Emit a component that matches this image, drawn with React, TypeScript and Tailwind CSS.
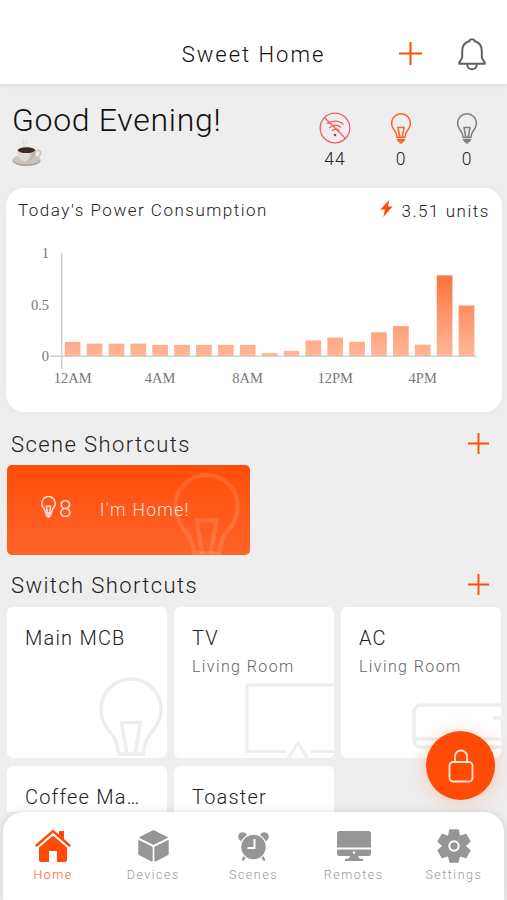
import type { ReactNode } from "react";
import clsx from "clsx";

const usage = [
  0.136, 0.12, 0.12, 0.12, 0.108, 0.108, 0.108, 0.108, 0.108, 0.028, 0.05,
  0.15, 0.178, 0.138, 0.23, 0.29, 0.11, 0.783, 0.49,
];

const hours = [
  { label: "12AM", slot: 0 },
  { label: "4AM", slot: 4 },
  { label: "8AM", slot: 8 },
  { label: "12PM", slot: 12 },
  { label: "4PM", slot: 16 },
];

const Plus = ({ className }: { className?: string }) => (
  <svg viewBox="0 0 22 22" className={className} stroke="#fb4f0a" strokeWidth="2">
    <path d="M11 0v22M0 11h22" />
  </svg>
);

const Bell = () => (
  <svg
    viewBox="0 0 28 33"
    className="h-[33px] w-7"
    fill="none"
    stroke="#606060"
    strokeWidth="2"
    strokeLinecap="round"
    strokeLinejoin="round"
  >
    <path d="M11.200 3.200C12 .5 16 .5 16.800 3.200C21.500 4.500 23.800 8.500 23.800 13V19C23.800 22 26.800 22.500 26.800 25.800H1.200C1.200 22.500 4.200 22 4.200 19V13C4.200 8.500 6.500 4.500 11.200 3.200Z" />
    <path d="M9.200 26.500C9.500 32.800 18.500 32.800 18.800 26.500" />
  </svg>
);

type BulbProps = { className?: string; stroke: string; width: number };

const Bulb = ({ className, stroke, width }: BulbProps) => (
  <svg
    viewBox="0 0 64 98"
    className={className}
    fill="none"
    stroke={stroke}
    strokeWidth={width}
  >
    <path d="M19.500 77C19 62 12 57 7.500 50C4 44.500 2 38.500 2 32a30 30 0 0 1 60 0C62 38.500 60 44.500 56.500 50C52 57 45 62 44.500 77Z" />
    <path d="M28 77L22.500 45.500H41.500L36 77" />
    <path d="M18.500 84.500h27M22 89.500h20M27 94.500h10" />
  </svg>
);

const NoWifi = () => (
  <svg viewBox="0 0 32 32" className="size-8" fill="none" stroke="#f25f5f" strokeWidth="1.3">
    <circle cx="16" cy="16" r="14.800" />
    <path d="M5.500 5.500L26.500 26.500" />
    <path d="M7.500 11C10 12 11 9.800 14 9.300C18 8.700 22 10 24.500 12.500M10 15.500C12.500 16 13 13.300 16 13.200C18.500 13.200 20.500 14.200 22 15.500M12.500 18.500C14.500 18.500 15 16.800 17 17C18.500 17 19.500 18 20.500 19" />
    <circle cx="16" cy="23" r="1.300" fill="#a3401f" stroke="none" />
  </svg>
);

const Coffee = () => (
  <svg viewBox="0 0 30 28" className="-mt-px h-7 w-[30px]">
    <ellipse cx="14.500" cy="21.500" rx="14" ry="5.500" fill="#aaa59c" />
    <ellipse cx="14.500" cy="20.500" rx="13.500" ry="4.800" fill="#c9c4bb" />
    <path d="M23.500 12C31 9 30 19 22 18.500" fill="none" stroke="#c9c5be" strokeWidth="1.700" />
    <path d="M5 11C5 18 9 22.500 14.500 22.500S24 18 24 11Z" fill="#dedad3" />
    <path d="M19 14C18.500 18 17 21 14.500 22.500C20 22 24 18 24 12Z" fill="#bbb6ae" />
    <ellipse cx="14.500" cy="11" rx="9.700" ry="3.400" fill="#e5e0d9" />
    <ellipse cx="14.500" cy="11.200" rx="8.800" ry="2.900" fill="#3a2b25" />
    <path d="M12 7C14 5 9 4 12 1M15 5C16 4 13 3 14 2" fill="none" stroke="#d4d4d4" strokeWidth="1" />
  </svg>
);

const PowerChart = () => (
  <svg viewBox="0 0 496 166" className="h-[166px] w-full">
    <defs>
      <linearGradient id="bar" gradientUnits="userSpaceOnUse" x1="0" y1="22" x2="0" y2="125">
        <stop offset="0" stopColor="#fe6023" />
        <stop offset="1" stopColor="#ffb799" />
      </linearGradient>
    </defs>
    <path d="M55.750 22V138M44 125.250H471" stroke="#d2d2d2" strokeWidth="1.500" />
    {usage.map((value, i) => (
      <rect
        key={i}
        x={58.8 + i * 21.88}
        y={125 - value * 103}
        width="15.700"
        height={value * 103}
        fill="url(#bar)"
      />
    ))}
    <g fontSize="14.500" fill="#777" className="font-['Liberation_Serif',serif]">
      <text x="43" y="26.500" textAnchor="end">1</text>
      <text x="43" y="78.500" textAnchor="end">0.5</text>
      <text x="43" y="130" textAnchor="end">0</text>
      {hours.map((hour) => (
        <text key={hour.label} x={66.6 + hour.slot * 21.88} y="151.500" textAnchor="middle">
          {hour.label}
        </text>
      ))}
    </g>
  </svg>
);

const Television = () => (
  <svg viewBox="0 0 90 78" className="h-[78px] w-[90px]" fill="none" stroke="#eee" strokeWidth="3">
    <path d="M90 5H3V71.500H42M67 71.500H90M43.500 80L54 63L64.500 80" />
  </svg>
);

const AirConditioner = () => (
  <svg viewBox="0 0 90 58" className="h-[58px] w-[90px]" fill="none" stroke="#eee" strokeWidth="3.500">
    <path d="M90 4H10Q2 4 2 12V38Q2 46 10 46H90M3 38H90M81 17H90" />
  </svg>
);

type SectionTitleProps = { children: ReactNode };

const SectionTitle = ({ children }: SectionTitleProps) => (
  <div className="flex items-center justify-between pl-[11px] pr-[18px]">
    <h2 className="pt-px text-[22px] leading-7 font-light tracking-[1.4px] text-[#222]">{children}</h2>
    <Plus className="-mt-0.5 size-[21px]" />
  </div>
);

type SwitchCardProps = { name: string; room?: string; icon?: ReactNode };

const SwitchCard = ({ name, room, icon }: SwitchCardProps) => (
  <div className="relative h-[151px] overflow-hidden rounded-md bg-white pt-[19px] pl-[18px]">
    <h3 className="text-[20px] leading-6 font-light tracking-[1.2px] text-[#222]">{name}</h3>
    {room && (
      <p className="mt-[7px] text-[16px] leading-5 font-light tracking-[1.4px] text-[#666]">{room}</p>
    )}
    {icon}
  </div>
);

const HomeIcon = () => (
  <svg viewBox="0 0 36 34" className="h-[34px] w-9" fill="currentColor">
    <path d="M4 18.500L18 6.500L32 18.500V31Q32 33 30 33H22V22H14V33H6Q4 33 4 31Z" />
    <path d="M1.500 17L18 2.500L34.500 17" fill="none" stroke="#fff" strokeWidth="5" />
    <path d="M24 2H29V11L24 6.500Z" />
    <path d="M1.500 16.500L18 2L34.500 16.500" fill="none" stroke="currentColor" strokeWidth="2.400" strokeLinecap="round" />
  </svg>
);

const CubeIcon = () => (
  <svg viewBox="0 0 32 34" className="h-[34px] w-8" fill="currentColor" stroke="currentColor" strokeLinejoin="round">
    <path d="M16.500 1.500L30.500 8.500L16.500 15.500L2.500 8.500Z" />
    <path d="M1.800 11.500L15.100 18V32.300L1.800 25.500Z" />
    <path d="M31.200 11.500L17.900 18V32.300L31.200 25.500Z" />
  </svg>
);

const AlarmIcon = () => (
  <svg viewBox="0 0 32 32" className="h-8 w-8" fill="currentColor">
    <path d="M9 25L6 29.500M24 25L27 29.500" stroke="currentColor" strokeWidth="2.400" strokeLinecap="round" />
    <circle cx="5.700" cy="6.700" r="4.500" />
    <circle cx="27.300" cy="6.700" r="4.500" />
    <circle cx="16.500" cy="17" r="12.800" stroke="#fff" strokeWidth="1.200" />
    <path d="M17.500 9V18H10.500" fill="none" stroke="#fff" strokeWidth="2" />
  </svg>
);

const MonitorIcon = () => (
  <svg viewBox="0 0 36 32" className="h-8 w-9" fill="currentColor">
    <path d="M3.500 1H32.500Q35 1 35 3.500V17.500H1V3.500Q1 1 3.500 1Z" />
    <path d="M1 19.500H35V23.500Q35 26 32.500 26H22Q22 29 27 29V31H9V29Q14 29 14 26H3.500Q1 26 1 23.500Z" />
    <circle cx="18" cy="22.500" r="1.200" fill="#fff" />
  </svg>
);

const GearIcon = () => (
  <svg viewBox="0 0 34 34" className="size-[34px]" fill="currentColor">
    <circle cx="17" cy="17" r="12" />
    <g stroke="currentColor" strokeWidth="1.500" strokeLinejoin="round">
      <path d="M13 1H21L22.500 8H11.500Z" />
      <path d="M13 1H21L22.500 8H11.500Z" transform="rotate(60 17 17)" />
      <path d="M13 1H21L22.500 8H11.500Z" transform="rotate(120 17 17)" />
      <path d="M13 1H21L22.500 8H11.500Z" transform="rotate(180 17 17)" />
      <path d="M13 1H21L22.500 8H11.500Z" transform="rotate(240 17 17)" />
      <path d="M13 1H21L22.500 8H11.500Z" transform="rotate(300 17 17)" />
    </g>
    <circle cx="17" cy="17" r="4.700" fill="none" stroke="#fff" strokeWidth="2" />
  </svg>
);

const tabs = [
  { label: "Home", icon: <HomeIcon />, active: true },
  { label: "Devices", icon: <CubeIcon />, active: false },
  { label: "Scenes", icon: <AlarmIcon />, active: false },
  { label: "Remotes", icon: <MonitorIcon />, active: false },
  { label: "Settings", icon: <GearIcon />, active: false },
];

const stats = [
  { icon: <NoWifi />, count: 44 },
  { icon: <Bulb className="h-[31px] w-5" stroke="#f9682b" width={5} />, count: 0 },
  { icon: <Bulb className="h-[31px] w-5" stroke="#808080" width={5} />, count: 0 },
];

const App = () => {
  return (
    <div className="relative flex h-[900px] w-[507px] flex-col overflow-hidden bg-[#eee] font-[Roboto,sans-serif]">
      <header className="z-10 grid h-[84px] shrink-0 grid-cols-[1fr_auto_1fr] items-center bg-white pt-6 shadow-[0_1px_5px_rgba(0,0,0,0.1)]">
        <h1 className="col-start-2 pt-0.5 text-[22px] leading-7 font-[350] tracking-[2px] text-[#111]">
          Sweet Home
        </h1>
        <div className="flex items-center justify-end gap-9 pr-[21px]">
          <Plus className="-mt-0.5 size-[23px]" />
          <Bell />
        </div>
      </header>

      <main className="h-[728px] shrink-0 overflow-hidden">
        <section className="flex h-[104px] justify-between pl-3 pr-[7px]">
          <div className="pt-4">
            <h2 className="text-[32px] leading-10 font-light tracking-[0.7px] text-[#111]">
              Good Evening!
            </h2>
            <Coffee />
          </div>
          <div className="grid grid-cols-3 pt-7">
            {stats.map((stat, i) => (
              <div key={i} className="flex w-[66px] flex-col items-center">
                <div className="flex h-8 items-center">{stat.icon}</div>
                <span className="mt-[3px] text-[17.500px] leading-6 font-[350] tracking-[1px] text-[#222]">
                  {stat.count}
                </span>
              </div>
            ))}
          </div>
        </section>

        <section className="ml-1.5 h-[224px] w-[496px] rounded-[18px] bg-white shadow-[0_0_10px_rgba(0,0,0,0.04)]">
          <div className="flex h-[43px] items-center justify-between px-3">
            <h3 className="mt-0.5 text-[17px] font-light tracking-[1.5px] text-[#222]">
              Today's Power Consumption
            </h3>
            <div className="flex items-center gap-2 text-[17px] font-light tracking-[1.55px] text-[#222]">
              <svg viewBox="0 0 13 18" className="-mt-0.5 h-[17px] w-[13px]" fill="#ff4b05">
                <path d="M9.500 0L0 10H5L3 18L13 7H8Z" />
              </svg>
              <span className="mt-1">3.51 units</span>
            </div>
          </div>
          <PowerChart />
        </section>

        <section className="pt-[18px]">
          <SectionTitle>Scene Shortcuts</SectionTitle>
          <div className="relative mt-1.5 ml-[7px] flex h-[90px] w-[243px] items-center overflow-hidden rounded-[5px] bg-linear-to-b from-[#ff4d05] to-[#ff6329] pl-[34px] text-[#ffe4da]">
            <Bulb className="-mt-1.5 h-[22px] w-[15px]" stroke="#ffe4da" width={6.5} />
            <span className="ml-[3px] text-[23px] font-light">8</span>
            <span className="ml-7 text-[17.500px] font-light tracking-[1.35px]">I'm Home!</span>
            <Bulb
              className="absolute top-2 left-[166px] h-[102px] w-[67px]"
              stroke="rgba(255,255,255,0.12)"
              width={4}
            />
          </div>
        </section>

        <section className="pt-4">
          <SectionTitle>Switch Shortcuts</SectionTitle>
          <div className="mt-[7px] ml-[7px] grid w-[494px] grid-cols-3 gap-x-[7px] gap-y-2">
            <SwitchCard
              name="Main MCB"
              icon={
                <Bulb
                  className="absolute top-[70px] left-[92px] h-[98px] w-16"
                  stroke="#eee"
                  width={3.5}
                />
              }
            />
            <SwitchCard
              name="TV"
              room="Living Room"
              icon={<div className="absolute right-0 bottom-0"><Television /></div>}
            />
            <SwitchCard
              name="AC"
              room="Living Room"
              icon={<div className="absolute top-[94px] left-[71px]"><AirConditioner /></div>}
            />
            <SwitchCard name="Coffee Ma…" />
            <SwitchCard name="Toaster" />
          </div>
        </section>
      </main>

      <button className="absolute top-[731px] left-[426px] flex size-[69px] items-center justify-center rounded-full bg-[#ff4b05] shadow-[0_2px_18px_rgba(255,75,5,0.25)]">
        <svg viewBox="0 0 26 34" className="h-[34px] w-[26px]" fill="none" stroke="#ffe6dc" strokeWidth="1.800">
          <rect x="1.500" y="13" width="23" height="19.500" rx="3.500" />
          <path d="M7 13V7.500a6 6 0 0 1 12 0V13" />
        </svg>
      </button>

      <nav className="z-10 mx-[3px] grid h-[88px] shrink-0 grid-cols-5 rounded-t-[20px] bg-white pt-4 shadow-[0_0_8px_rgba(0,0,0,0.13)]">
        {tabs.map((tab) => (
          <div
            key={tab.label}
            className={clsx(
              "flex flex-col items-center",
              tab.active ? "text-[#ff4b05]" : "text-[#969696]"
            )}
          >
            <div className="flex h-[35px] items-center">{tab.icon}</div>
            <span
              className={clsx(
                "mt-1 text-[12.500px] leading-4 font-[350] tracking-[1.5px]",
                tab.active ? "text-[#ff5a22]" : "text-[#999]"
              )}
            >
              {tab.label}
            </span>
          </div>
        ))}
      </nav>
    </div>
  );
};

export default App;
